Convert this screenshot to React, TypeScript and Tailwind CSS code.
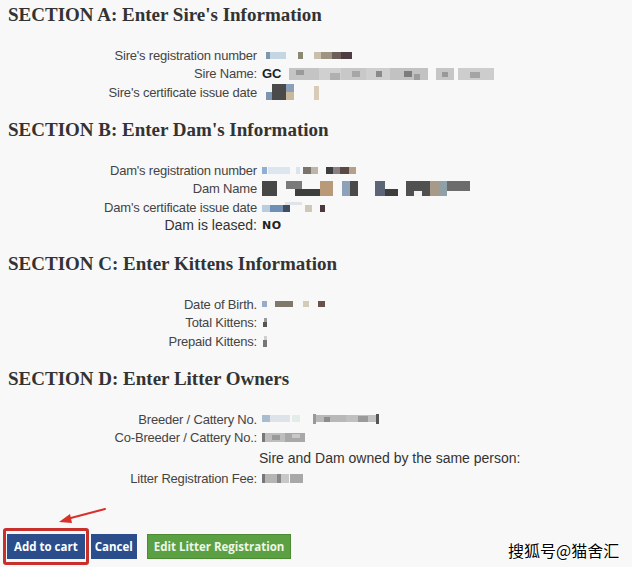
import React from 'react';

type Block = [number, number, string, number?, number?]; // x offset, width, color, top, height

// blurred (pixelated) values from the screenshot
function Mosaic({ blocks, h = 8 }: { blocks: Block[]; h?: number }) {
    const w = Math.max(...blocks.map((b) => b[0] + b[1]));
    return (
        <span className="relative inline-block align-middle" style={{ width: w, height: h }}>
            {blocks.map((b, i) => (
                <span
                    key={i}
                    className="absolute"
                    style={{ left: b[0], width: b[1], top: b[3] ?? 0, height: b[4] ?? h, background: b[2] }}
                />
            ))}
        </span>
    );
}

const labelFont = { fontFamily: '"Liberation Sans", Arial, sans-serif' };
const btnFont = { fontFamily: '"Open Sans", sans-serif' };

function Row({ label, children, big = false }: { label: string; children?: React.ReactNode; big?: boolean }) {
    return (
        <div className="flex h-[18.5px] items-center">
            <div
                className={`w-[257px] shrink-0 text-right whitespace-nowrap ${big ? 'text-[14px] text-[#333]' : 'text-[13px] tracking-[-0.2px] text-[#444]'}`}
                style={labelFont}
            >
                {label}
            </div>
            <div className="ml-[5px] flex items-center">{children}</div>
        </div>
    );
}

function Heading({ children }: { children: React.ReactNode }) {
    return (
        <h2
            className="h-[24px] pl-[8px] text-[19px] font-bold leading-[24px] text-[#333]"
            style={{ fontFamily: '"Liberation Serif", "Times New Roman", serif' }}
        >
            {children}
        </h2>
    );
}

export default function App() {
    return (
        <div className="relative h-[567px] w-[632px] overflow-hidden bg-[#f8f8f8]" style={labelFont}>
            <div className="pt-[3px]">
                {/* Section A */}
                <Heading>SECTION A: Enter Sire's Information</Heading>
                <div className="mt-[19px]">
                    <Row label="Sire's registration number">
                        <Mosaic
                            blocks={[
                                [4, 4, '#7f96ad'], [8, 16, '#c5d6e3'], [36, 5, '#8a8a74'],
                                [52, 7, '#c8c0ac'], [59, 11, '#9c9382'], [70, 9, '#6a5d5a'], [79, 11, '#4e3e44'],
                            ]}
                            h={7}
                        />
                    </Row>
                    <Row label="Sire Name:">
                        <span className="text-[13px] font-bold text-[#222]">GC</span>
                        <Mosaic
                            h={12}
                            blocks={[
                                [7, 30, '#c4c4c4'], [14, 8, '#9a9a9a', 2, 5], [37, 22, '#d0d0d0'], [48, 10, '#b0b0b0', 5, 7],
                                [59, 25, '#c8c8c8'], [70, 8, '#a6a6a6', 3, 6], [84, 24, '#cfcfcf'], [94, 6, '#8a8a8a', 3, 6],
                                [108, 38, '#c2c2c2'], [122, 8, '#7c7c7c', 3, 6], [132, 6, '#9c9c9c', 6, 6],
                                [154, 18, '#c6c6c6'], [160, 6, '#999', 4, 5], [176, 36, '#cdcdcd'], [188, 10, '#a4a4a4', 4, 6],
                            ]}
                        />
                    </Row>
                    <Row label="Sire's certificate issue date">
                        <Mosaic
                            h={16}
                            blocks={[
                                [4, 6, '#7d95b0', 8, 8], [10, 14, '#4a4a4a'], [24, 8, '#8aa0b8', 0, 8], [24, 8, '#c9b89a', 8, 8],
                                [52, 5, '#d8cbb8', 2, 14],
                            ]}
                        />
                    </Row>
                </div>

                {/* Section B */}
                <div className="mt-[16.5px]">
                    <Heading>SECTION B: Enter Dam's Information</Heading>
                </div>
                <div className="mt-[19px]">
                    <Row label="Dam's registration number">
                        <Mosaic
                            h={7}
                            blocks={[
                                [0, 5, '#8fb0d5'], [6, 22, '#dbe6ee'], [34, 4, '#d9e4ec'], [41, 8, '#7b746a'], [49, 7, '#bdb6a8'],
                                [64, 7, '#3e3e3e'], [71, 7, '#8a8080'], [78, 9, '#5b4a44'], [87, 7, '#b5a08a'],
                            ]}
                        />
                    </Row>
                    <Row label="Dam Name">
                        <Mosaic
                            h={15}
                            blocks={[
                                [0, 15, '#474747'], [24, 16, '#7a7a7a', 0, 8], [33, 25, '#3e3e3e', 8, 7], [58, 13, '#b89a78'],
                                [80, 8, '#8da2b8'], [88, 8, '#4a4a4a'], [113, 10, '#5c6478'], [123, 13, '#3d3d3d', 8, 7],
                                [144, 24, '#505050'], [152, 8, '#f4f4f4', 10, 5], [168, 10, '#a89a88'], [178, 7, '#8fa0a8'],
                                [185, 23, '#6c6c6c', 0, 10],
                            ]}
                        />
                    </Row>
                    <Row label="Dam's certificate issue date">
                        <Mosaic
                            h={10}
                            blocks={[
                                [0, 8, '#b8cde0', 3, 7], [8, 13, '#6f8fb5', 3, 7], [21, 7, '#3e4e5e', 3, 7], [23, 17, '#e0e4ea', 0, 3],
                                [43, 7, '#cfc8b8', 3, 7], [58, 5, '#4a3a40', 3, 7],
                            ]}
                        />
                    </Row>
                    <Row label="Dam is leased:" big>
                        <span className="text-[11px] font-bold tracking-[0.5px] text-[#222]" style={{ fontFamily: '"DejaVu Sans", sans-serif' }}>
                            NO
                        </span>
                    </Row>
                </div>

                {/* Section C */}
                <div className="mt-[17px]">
                    <Heading>SECTION C: Enter Kittens Information</Heading>
                </div>
                <div className="mt-[19px]">
                    <Row label="Date of Birth.">
                        <Mosaic h={6} blocks={[[0, 5, '#98acc8'], [13, 18, '#807868'], [41, 6, '#d4cab8'], [56, 7, '#6a5248']]} />
                    </Row>
                    <Row label="Total Kittens:">
                        <Mosaic h={9} blocks={[[2, 3, '#9a9a9a', 0, 4], [1, 4, '#555', 4, 5]]} />
                    </Row>
                    <Row label="Prepaid Kittens:">
                        <Mosaic h={11} blocks={[[2, 3, '#cfcfcf', 0, 4], [1, 4, '#777', 4, 7]]} />
                    </Row>
                </div>

                {/* Section D */}
                <div className="mt-[16.5px]">
                    <Heading>SECTION D: Enter Litter Owners</Heading>
                </div>
                <div className="mt-[19px]">
                    <Row label="Breeder / Cattery No.">
                        <Mosaic
                            h={10}
                            blocks={[
                                [0, 8, '#a8bcd0', 1, 7], [8, 20, '#dde3e8', 1, 7], [30, 8, '#e3ece8', 1, 7],
                                [51, 3, '#999'], [54, 30, '#b8b8b8', 1, 7], [62, 6, '#8c8c8c', 3, 5], [84, 30, '#c0c0c0', 1, 7],
                                [96, 10, '#9a9a9a', 2, 6], [114, 3, '#555'],
                            ]}
                        />
                    </Row>
                    <Row label="Co-Breeder / Cattery No.:">
                        <Mosaic h={9} blocks={[[0, 3, '#777'], [3, 20, '#bdbdbd'], [10, 8, '#999', 2, 5], [23, 20, '#a8a8a8'], [30, 8, '#c8c8c8', 1, 4]]} />
                    </Row>
                    <div className="flex h-[22px] items-center pl-[259px] text-[14px] text-[#333]">
                        Sire and Dam owned by the same person:
                    </div>
                    <Row label="Litter Registration Fee:">
                        <Mosaic h={9} blocks={[[0, 3, '#777'], [3, 12, '#b5b5b5'], [15, 4, '#888'], [19, 8, '#c8c8c8'], [28, 13, '#a8a8a8']]} />
                    </Row>
                </div>
            </div>

            {/* Buttons */}
            <div className="absolute left-[3px] top-[528px] flex items-center">
                <div className="rounded-[3px] border-[3px] border-[#c9302c] px-[1px] py-[3px]">
                    <button className="h-[25px] bg-[#2c4d8c] px-[7px] text-[11.5px] font-bold text-white" style={btnFont}>
                        Add to cart
                    </button>
                </div>
                <button className="ml-[2px] h-[25px] bg-[#2c4d8c] px-[4px] text-[11.5px] font-bold text-white" style={btnFont}>
                    Cancel
                </button>
                <button
                    className="ml-[10px] h-[25px] border border-[#4d8a34] bg-[#5ba043] px-[6px] text-[11.5px] font-bold text-[#eef7e8]"
                    style={btnFont}
                >
                    Edit Litter Registration
                </button>
            </div>

            {/* Red arrow */}
            <svg className="absolute left-[55px] top-[505px]" width="55" height="22" viewBox="0 0 55 22">
                <path d="M50 4 L12 14" stroke="#d9302a" strokeWidth="2" strokeLinecap="round" />
                <path d="M4 17 L15 9 L17 18 Z" fill="#d9302a" />
            </svg>

            {/* Watermark */}
            <div
                className="absolute left-[508px] top-[538px] text-[16px] text-black"
                style={{
                    fontFamily: '"Noto Sans CJK SC", sans-serif',
                    textShadow: '1px 0 #fff, -1px 0 #fff, 0 1px #fff, 0 -1px #fff',
                }}
            >
                搜狐号@猫舍汇
            </div>
        </div>
    );
}
